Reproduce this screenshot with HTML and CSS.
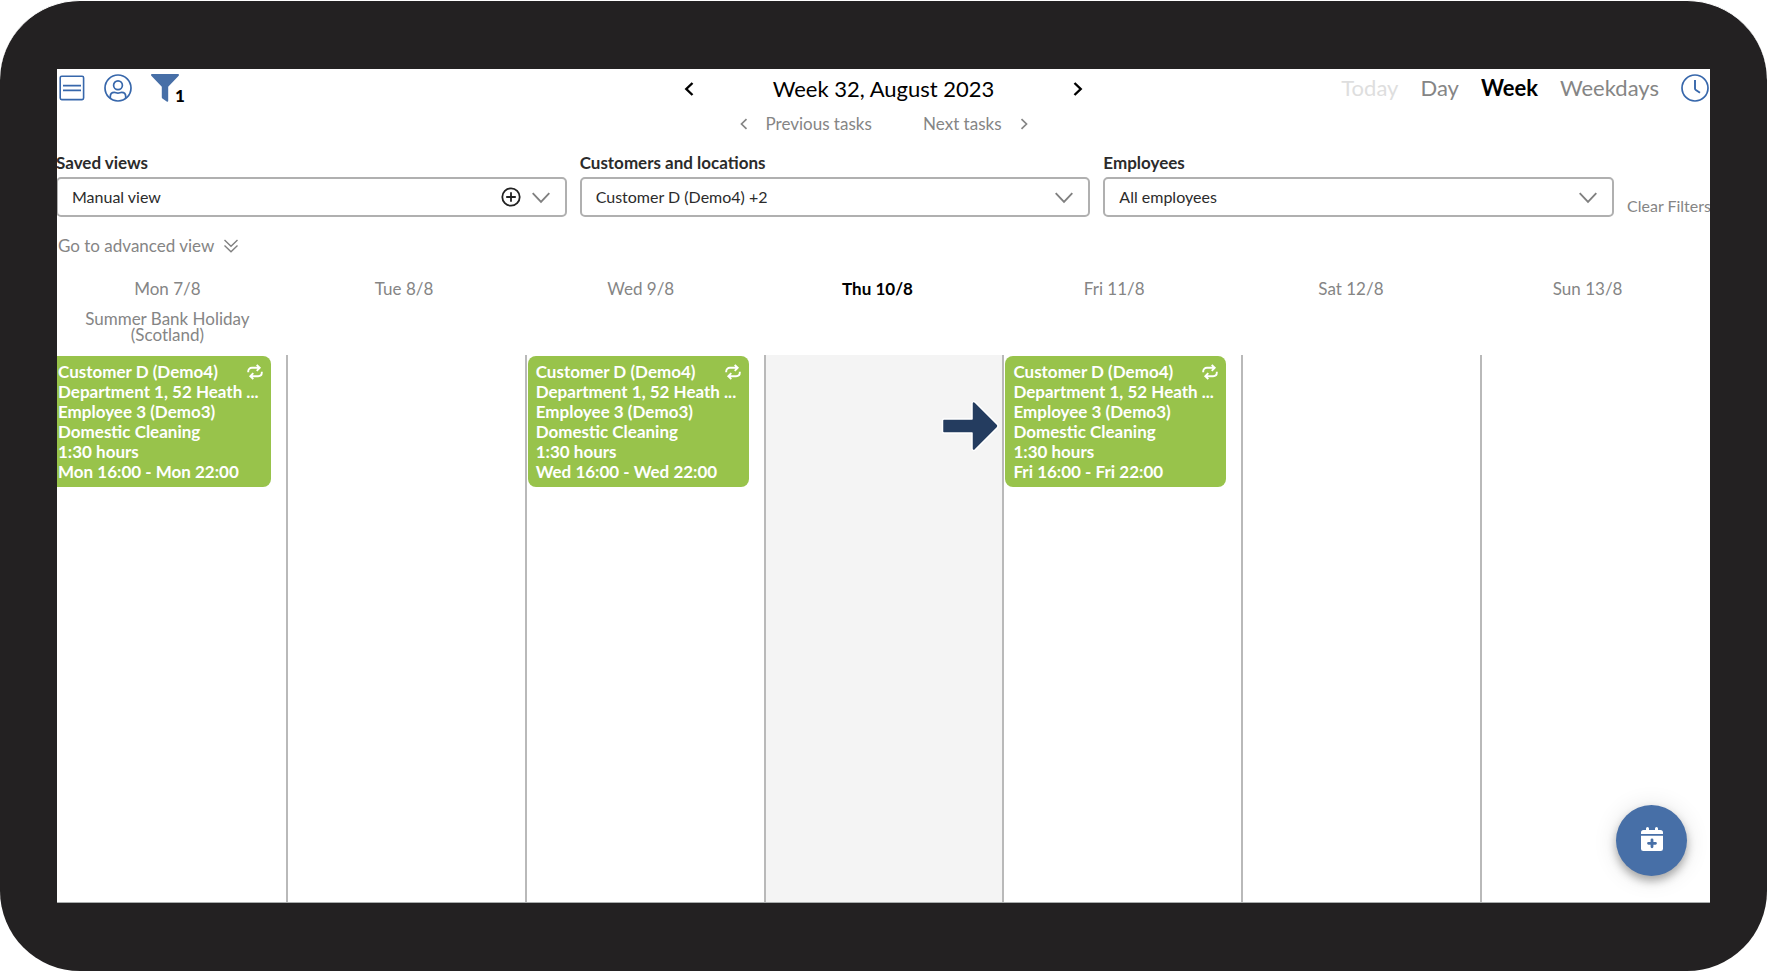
FILE: index.html
```html
<!DOCTYPE html>
<html lang="en">
<head>
    <meta charset="UTF-8">
    <meta name="viewport" content="width=device-width, initial-scale=1">
    <title>Week 32, August 2023</title>
    <link rel="stylesheet" href="styles.css">
</head>
<body>
<div class="tablet">
    <div class="screen">

        <header class="toolbar">
            <div class="tools">
                <button class="icon-btn" aria-label="Menu">
                    <svg width="26" height="28" viewBox="0 0 26 28" fill="none" stroke="#3767ab" stroke-width="1.6">
                        <rect x="1.2" y="2.2" width="23.4" height="23.4" rx="1.5"/>
                        <path d="M4 11.7h18M4 16.3h18" stroke-width="1.7"/>
                    </svg>
                </button>
                <button class="icon-btn" aria-label="Profile">
                    <svg width="28" height="28" viewBox="0 0 28 28" fill="none" stroke="#3767ab" stroke-width="1.7">
                        <circle cx="14" cy="14" r="13"/>
                        <circle cx="14" cy="11.3" r="4.4"/>
                        <path d="M6.3 24.2v-1.6c0-2.6 1.7-4.2 4-4.2 1.4 0 2.2.8 3.7.8s2.3-.8 3.7-.8c2.3 0 4 1.6 4 4.2v1.6"/>
                    </svg>
                </button>
                <button class="icon-btn filter-btn" aria-label="Filters, 1 active">
                    <svg width="28" height="28" viewBox="0 0 28 28" fill="#476fa7">
                        <path d="M1 0h26c1 0 1.3 1 .7 1.7L17.2 12.7V27c0 .8-.8 1.1-1.5.6l-4.3-3.2c-.4-.3-.6-.7-.6-1.2V12.7L.3 1.7C-.3 1 0 0 1 0z"/>
                    </svg>
                    <span class="filter-count">1</span>
                </button>
            </div>

            <div class="period">
                <div class="period-row">
                    <button class="icon-btn" aria-label="Previous week">
                        <svg width="10" height="14" viewBox="0 0 10 14" fill="none" stroke="#000" stroke-width="2.4"><path d="M8.5 1L2.3 7l6.2 6"/></svg>
                    </button>
                    <h1>Week 32, August 2023</h1>
                    <button class="icon-btn" aria-label="Next week">
                        <svg width="10" height="14" viewBox="0 0 10 14" fill="none" stroke="#000" stroke-width="2.4"><path d="M1.5 1l6.2 6-6.2 6"/></svg>
                    </button>
                </div>
                <div class="task-row">
                    <button class="text-btn">
                        <svg width="8" height="12" viewBox="0 0 8 12" fill="none" stroke="#858585" stroke-width="1.7"><path d="M6.5 1.2L1.5 6l5 4.800"/></svg>
                        Previous tasks
                    </button>
                    <button class="text-btn">
                        Next tasks
                        <svg width="8" height="12" viewBox="0 0 8 12" fill="none" stroke="#858585" stroke-width="1.7"><path d="M1.5 1.2L6.5 6l-5 4.800"/></svg>
                    </button>
                </div>
            </div>

            <nav class="view-switch">
                <button class="view-btn" disabled>Today</button>
                <button class="view-btn">Day</button>
                <button class="view-btn active">Week</button>
                <button class="view-btn">Weekdays</button>
                <button class="icon-btn" aria-label="Time">
                    <svg width="28" height="28" viewBox="0 0 28 28" fill="none" stroke="#3767ab" stroke-width="1.7">
                        <circle cx="14" cy="14" r="13"/>
                        <path d="M14 6v8.5c0 .8.3 1.2.8 1.5l4.2 2.8" stroke-width="1.9"/>
                    </svg>
                </button>
            </nav>
        </header>

        <form class="filters">
            <div class="field">
                <label for="saved-views">Saved views</label>
                <div class="select-wrap">
                    <select id="saved-views"><option>Manual view</option></select>
                    <button type="button" class="icon-btn add-view" aria-label="Add view">
                        <svg width="20" height="20" viewBox="0 0 20 20" fill="none" stroke="#222" stroke-width="1.8">
                            <circle cx="10" cy="10" r="8.7"/>
                            <path d="M10 5.2v9.6M5.2 10h9.6"/>
                        </svg>
                    </button>
                    <svg class="caret" width="18" height="12" viewBox="0 0 18 12" fill="none" stroke="#808080" stroke-width="1.9"><path d="M.7 1.2L9 9.8l8.3-8.6"/></svg>
                </div>
            </div>
            <div class="field">
                <label for="customers">Customers and locations</label>
                <div class="select-wrap">
                    <select id="customers"><option>Customer D (Demo4) +2</option></select>
                    <svg class="caret" width="18" height="12" viewBox="0 0 18 12" fill="none" stroke="#808080" stroke-width="1.9"><path d="M.7 1.2L9 9.8l8.3-8.6"/></svg>
                </div>
            </div>
            <div class="field">
                <label for="employees">Employees</label>
                <div class="select-wrap">
                    <select id="employees"><option>All employees</option></select>
                    <svg class="caret" width="18" height="12" viewBox="0 0 18 12" fill="none" stroke="#808080" stroke-width="1.9"><path d="M.7 1.2L9 9.8l8.3-8.6"/></svg>
                </div>
            </div>
            <button type="reset" class="text-btn clear">Clear Filters</button>
        </form>

        <button class="text-btn advanced">
            Go to advanced view
            <svg width="14" height="14" viewBox="0 0 14 14" fill="none" stroke="#808080" stroke-width="1.4"><path d="M.5 1L7 7.2 13.5 1M.5 6.5L7 12.7l6.5-6.2"/></svg>
        </button>

        <div class="day-heads">
            <div class="day-head">Mon 7/8<p>Summer Bank Holiday (Scotland)</p></div>
            <div class="day-head">Tue 8/8</div>
            <div class="day-head">Wed 9/8</div>
            <div class="day-head current">Thu 10/8</div>
            <div class="day-head">Fri 11/8</div>
            <div class="day-head">Sat 12/8</div>
            <div class="day-head">Sun 13/8</div>
        </div>

        <main class="days">
            <div class="day">
                <article class="event">
                    <svg class="repeat" width="16" height="16" viewBox="0 0 16 16" fill="none" stroke="#fff" stroke-width="1.9"><path d="M1.2 8.3V7.5c0-2.2 1.5-3.7 3.7-3.7h7M9.7.8l3 3-3 3M14.8 7.7v.8c0 2.2-1.5 3.7-3.7 3.7h-7M6.3 9.2l-3 3 3 3"/></svg>
                    <p>Customer D (Demo4)</p>
                    <p>Department 1, 52 Heath ...</p>
                    <p>Employee 3 (Demo3)</p>
                    <p>Domestic Cleaning</p>
                    <p>1:30 hours</p>
                    <p>Mon 16:00 - Mon 22:00</p>
                </article>
            </div>
            <div class="day"></div>
            <div class="day">
                <article class="event">
                    <svg class="repeat" width="16" height="16" viewBox="0 0 16 16" fill="none" stroke="#fff" stroke-width="1.9"><path d="M1.2 8.3V7.5c0-2.2 1.5-3.7 3.7-3.7h7M9.7.8l3 3-3 3M14.8 7.7v.8c0 2.2-1.5 3.7-3.7 3.7h-7M6.3 9.2l-3 3 3 3"/></svg>
                    <p>Customer D (Demo4)</p>
                    <p>Department 1, 52 Heath ...</p>
                    <p>Employee 3 (Demo3)</p>
                    <p>Domestic Cleaning</p>
                    <p>1:30 hours</p>
                    <p>Wed 16:00 - Wed 22:00</p>
                </article>
            </div>
            <div class="day current">
                <svg class="pointer" width="58" height="52" viewBox="0 0 58 52" fill="#243c5f" stroke="#fff" stroke-width="1.5" stroke-linejoin="round"><path d="M3 19h28V3.5c0-2 1.8-2.5 3.2-1.2l22 22c1 1 1 2.4 0 3.4l-22 22c-1.4 1.3-3.2.8-3.2-1.2V33H3c-1 0-1.5-.6-1.5-1.5v-11C1.5 19.6 2 19 3 19z"/></svg>
            </div>
            <div class="day">
                <article class="event">
                    <svg class="repeat" width="16" height="16" viewBox="0 0 16 16" fill="none" stroke="#fff" stroke-width="1.9"><path d="M1.2 8.3V7.5c0-2.2 1.5-3.7 3.7-3.7h7M9.7.8l3 3-3 3M14.8 7.7v.8c0 2.2-1.5 3.7-3.7 3.7h-7M6.3 9.2l-3 3 3 3"/></svg>
                    <p>Customer D (Demo4)</p>
                    <p>Department 1, 52 Heath ...</p>
                    <p>Employee 3 (Demo3)</p>
                    <p>Domestic Cleaning</p>
                    <p>1:30 hours</p>
                    <p>Fri 16:00 - Fri 22:00</p>
                </article>
            </div>
            <div class="day"></div>
            <div class="day"></div>
        </main>

        <button class="fab" aria-label="Add task">
            <svg width="22" height="24" viewBox="0 0 22 24">
                <path fill="#fff" d="M5 1.5a1.5 1.5 0 0 1 3 0V3h6V1.5a1.5 1.5 0 0 1 3 0V3h2.5A2.5 2.5 0 0 1 22 5.5V7H0V5.5A2.5 2.5 0 0 1 2.5 3H5z"/>
                <path fill="#fff" d="M0 8.7h22v13a2.3 2.3 0 0 1-2.3 2.3H2.3A2.3 2.3 0 0 1 0 21.7z"/>
                <path stroke="#476fa7" stroke-width="2.8" stroke-linecap="round" d="M11 12.8v7M7.5 16.3h7"/>
            </svg>
        </button>
    </div>
</div>
</body>
</html>
```
FILE: styles.css
```css
* {
    box-sizing: border-box;
}
body {
    margin: 0;
    background: #fff;
    color: #2b2b2b;
    font-family: Lato, "Open Sans", sans-serif;
    font-size: 17px;
    line-height: 20px;
}
p, h1 {
    margin: 0;
}
button, select {
    font: inherit;
    color: inherit;
}
button {
    padding: 0;
    border: 0;
    background: none;
    cursor: pointer;
}
svg {
    display: block;
}

/* frame */
.tablet {
    display: flex;
    min-height: 100vh;
    padding: 68px 57px;
    background: #232122;
    border-top: 1px solid #fff;
    border-radius: 80px;
}
.screen {
    position: relative;
    display: flex;
    flex-direction: column;
    flex: 1;
    min-width: 0;
    overflow: hidden;
    background: #fff;
    border-bottom: 1px solid #a9adad;
}

/* toolbar */
.toolbar {
    display: grid;
    grid-template-columns: 1fr 400px 1fr;
    align-items: start;
    padding-top: 5px;
}
.tools {
    display: flex;
    gap: 19px;
    padding-left: 2px;
}
.filter-btn {
    position: relative;
}
.filter-count {
    position: absolute;
    left: 24px;
    top: 12px;
    color: #000;
    font-weight: 900;
}
.period-row {
    display: flex;
    align-items: center;
    justify-content: space-between;
    height: 30px;
}
h1 {
    color: #000;
    font-size: 22px;
    font-weight: 400;
    line-height: 28px;
}
.task-row {
    display: flex;
    justify-content: space-between;
    padding: 10px 56px 0;
}
.text-btn {
    display: flex;
    align-items: center;
    gap: 18px;
    color: #858585;
    white-space: nowrap;
}
.view-switch {
    display: flex;
    justify-content: flex-end;
    align-items: center;
    gap: 22px;
    padding-right: 1px;
}
.view-btn {
    color: #858585;
    font-size: 22px;
    line-height: 28px;
}
.view-btn:disabled {
    color: #dedede;
}
.view-btn.active {
    color: #000;
    font-weight: 700;
}

/* filters */
.filters {
    display: flex;
    gap: 13px;
    margin: 19px -4px 0 -1px;
}
.field {
    flex: 1;
    min-width: 0;
}
.field label {
    display: block;
    margin-bottom: 4px;
    font-weight: 700;
}
.select-wrap {
    position: relative;
}
.select-wrap select {
    display: block;
    width: 100%;
    height: 40px;
    padding: 0 14px;
    appearance: none;
    background: #fff;
    border: 2px solid #b0b0b0;
    border-radius: 5px;
    font-size: 16px;
}
.caret {
    position: absolute;
    right: 17px;
    top: 15px;
    pointer-events: none;
}
.add-view {
    position: absolute;
    right: 46px;
    top: 10px;
}
.clear {
    align-self: flex-end;
    width: 87px;
    margin-bottom: 1px;
    font-size: 16px;
}
.advanced {
    align-self: flex-start;
    gap: 10px;
    margin: 19px 0 0 1px;
}

/* calendar */
.day-heads {
    display: grid;
    grid-template-columns: repeat(7, 1fr);
    min-height: 76px;
    margin: 23px 4px 0 -8px;
}
.day-head {
    padding: 0 30px;
    color: #858585;
    text-align: center;
}
.day-head p {
    margin-top: 12px;
    line-height: 16px;
}
.day-head.current {
    color: #000;
    font-weight: 700;
}
.days {
    display: grid;
    grid-template-columns: repeat(7, 1fr);
    flex: 1;
    margin: 0 -11px 0 -8px;
}
.day {
    position: relative;
    border-right: 2px solid #b9b9b9;
}
.day.current {
    background: #f4f4f4;
}
.event {
    position: relative;
    width: 221px;
    margin: 1px 0 0 1px;
    padding: 6px 8px 5px;
    background: #98c34b;
    border-radius: 8px;
    color: #fff;
    font-weight: 700;
    white-space: nowrap;
}
.repeat {
    position: absolute;
    right: 8px;
    top: 8px;
}
.pointer {
    position: absolute;
    right: 3px;
    top: 45px;
}

.fab {
    position: absolute;
    right: 23px;
    bottom: 26px;
    display: grid;
    place-items: center;
    width: 71px;
    height: 71px;
    padding-bottom: 4px;
    background: #476fa7;
    border-radius: 50%;
    box-shadow: 0 5px 8px rgba(0,0,0,0.3), 0 2px 24px rgba(0,0,0,0.12);
}
```
